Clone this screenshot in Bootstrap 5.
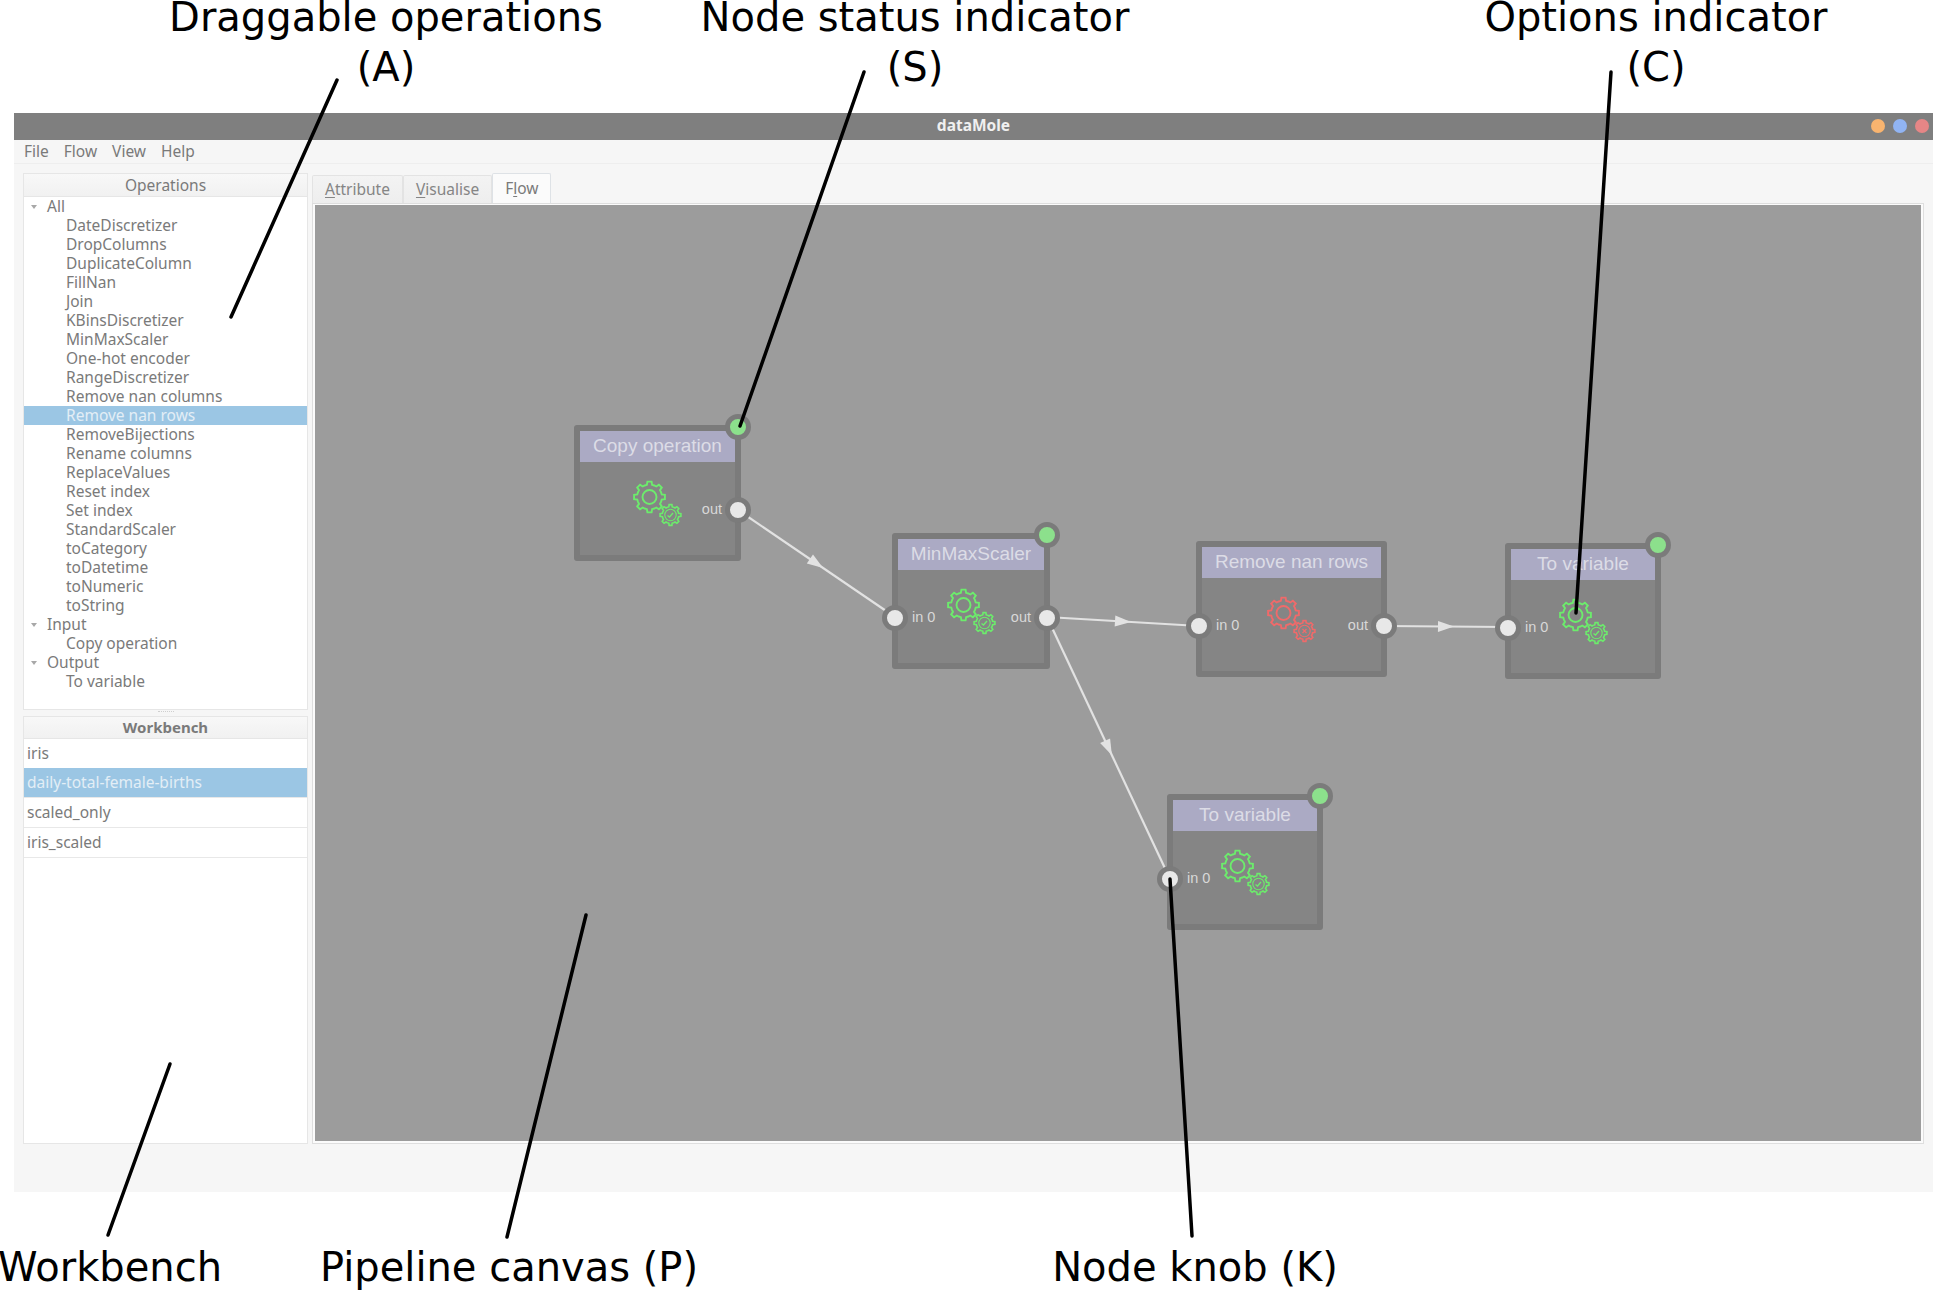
<!DOCTYPE html>
<html lang="en">
<head>
  <meta charset="UTF-8" />
  <title>dataMole</title>
  <link href="https://cdn.jsdelivr.net/npm/bootstrap@5.3.3/dist/css/bootstrap.min.css" rel="stylesheet" />
  <style>
    body {
      background: #fff;
      width: 1933px;
      height: 1290px;
      position: relative;
      overflow: hidden;
      font-family: "Noto Sans", "Open Sans", sans-serif;
      font-size: 15.5px;
      color: #7a7a7a;
    }
    .app-window {
      margin: 113px 0 0 14px;
      width: 1919px;
      height: 1079px;
      background: #f6f6f6;
    }
    .title-bar {
      height: 27px;
      padding-bottom: 2px;
      background: #7f7f7f;
      color: #f0f0f0;
      font-weight: 700;
      font-size: 15.5px;
    }
    .traffic {
      right: 4px;
      top: 6px;
    }
    .traffic span {
      width: 14px;
      height: 14px;
      border-radius: 50%;
      display: block;
    }
    .menu-bar {
      height: 24px;
      padding-left: 10px;
      gap: 15px;
      border-bottom: 1px solid #eeeeee;
      line-height: 22px;
    }
    .work-area {
      height: 1028px;
      padding: 9px 9px 48px 9px;
      gap: 4px;
    }
    .side-col {
      width: 285px;
      flex: none;
    }
    .panel-head {
      height: 24px;
      line-height: 22px;
      text-align: center;
      background: linear-gradient(#f8f8f8, #f1f1f1);
      border: 1px solid #e6e6e6;
    }
    .tree-panel {
      height: 513px;
      background: #fff;
      border: 1px solid #e6e6e6;
      border-top: 0;
    }
    .splitter {
      height: 5px;
      width: 16px;
      margin: 1px auto 0 auto;
      border-top: 1px dotted #cfcfcf;
    }
    .tree-row {
      height: 19px;
      line-height: 18px;
      white-space: nowrap;
    }
    .tree-row.leaf {
      padding-left: 42px;
    }
    .tree-row.group {
      padding-left: 23px;
      position: relative;
    }
    .tree-row.group::before {
      content: "";
      position: absolute;
      left: 7px;
      top: 8px;
      border: 3.5px solid transparent;
      border-top: 4px solid #a8a8a8;
      border-bottom: 0;
    }
    .tree-row.picked {
      background: #9bc6e4;
      color: #e3eef6;
    }
    .wb-head {
      font-weight: 700;
      font-size: 15px;
      height: 23px;
      line-height: 21px;
    }
    .wb-list {
      flex: 1;
      background: #fff;
      border: 1px solid #e6e6e6;
      border-top: 0;
      border-radius: 0;
    }
    .wb-list .list-group-item {
      height: 30px;
      line-height: 28px;
      padding: 0 3px;
      color: #7a7a7a;
      background: #fff;
      border: 0;
      border-bottom: 1px solid #e8e8e8;
      border-radius: 0;
      margin-top: 0;
    }
    .wb-list .list-group-item.active {
      background: #9bc6e4;
      color: #e3eef6;
    }
    .canvas-col {
      flex: 1;
      min-width: 0;
    }
    .nav-tabs.flow-tabs {
      height: 30px;
      padding-top: 2px;
      border: 0;
      gap: 0;
    }
    .flow-tabs .nav-link {
      height: 28px;
      line-height: 26px;
      padding: 0 12px;
      margin: 0;
      color: #858585;
      background: linear-gradient(#f3f3f3, #eeeeee);
      border: 1px solid #e3e3e3;
      border-bottom: 0;
      border-radius: 2px 2px 0 0;
    }
    .flow-tabs .nav-link u {
      text-underline-offset: 2px;
    }
    .flow-tabs .nav-link.active {
      height: 30px;
      margin: -2px 0 0 0;
      line-height: 28px;
      color: #7a7a7a;
      background: #fbfbfb;
    }
    .canvas-frame {
      height: 941px;
      border: 1px solid #dedede;
      padding: 1px 2px 2px 2px;
      background: #fbfbfb;
    }
    .pipeline-canvas {
      position: relative;
      width: 100%;
      height: 100%;
      background: #9c9c9c;
      overflow: hidden;
    }
    .wires {
      position: absolute;
      left: 0;
      top: 0;
    }
    .flow-node {
      position: absolute;
      border: 6px solid #7b7b7b;
      border-radius: 3px;
      background: #858585;
      font-family: "Liberation Sans", Arial, sans-serif;
    }
    .node-title {
      height: 31px;
      line-height: 29px;
      background: #abaac4;
      color: #dcdce6;
      font-size: 19px;
      text-align: center;
      white-space: nowrap;
    }
    .node-body {
      height: 93px;
      display: grid;
      grid-template-columns: 1fr 52px 1fr;
      align-items: center;
      padding: 3px 13px 0 14px;
      color: #d8d8d8;
      font-size: 14.5px;
    }
    .node-body svg {
      align-self: start;
      margin: 12px 0 0 -1px;
      overflow: visible;
    }
    .port-out {
      text-align: right;
    }
    .knob {
      position: absolute;
      width: 26px;
      height: 26px;
      border-radius: 50%;
      border: 5px solid #7b7b7b;
      background: #e8e8e8;
    }
    .knob.port-left {
      left: -16px;
      top: 66px;
    }
    .knob.port-right {
      right: -16px;
      top: 66px;
    }
    .knob.status {
      right: -16px;
      top: -17px;
      background: #8ce08c;
    }
    .note-lines {
      position: absolute;
      left: 0;
      top: 0;
      pointer-events: none;
    }
    .note {
      position: absolute;
      width: 700px;
      gap: 15px;
      text-align: center;
      font-family: "DejaVu Sans", sans-serif;
      font-size: 40px;
      line-height: 35px;
      color: #000;
      white-space: nowrap;
    }
    .note-a { left: 36px; top: 0; }
    .note-s { left: 565px; top: 0; }
    .note-c { left: 1306px; top: 0; }
    .note-w { left: -240px; top: 1250px; }
    .note-p { left: 159px; top: 1250px; }
    .note-k { left: 845px; top: 1250px; }
  </style>
</head>
<body>
  <div class="app-window d-flex flex-column">
    <div class="title-bar position-relative d-flex align-items-center justify-content-center">
      dataMole
      <div class="traffic position-absolute d-flex gap-2">
        <span style="background:#f9b46f"></span>
        <span style="background:#91b4f3"></span>
        <span style="background:#e68686"></span>
      </div>
    </div>
    <div class="menu-bar d-flex">
      <span>File</span><span>Flow</span><span>View</span><span>Help</span>
    </div>
    <div class="work-area d-flex">
      <div class="side-col d-flex flex-column">
        <div class="panel-head">Operations</div>
        <div class="tree-panel" id="opsTree"></div>
        <div class="splitter"></div>
        <div class="panel-head wb-head">Workbench</div>
        <div class="list-group wb-list">
          <div class="list-group-item">iris</div>
          <div class="list-group-item active">daily-total-female-births</div>
          <div class="list-group-item">scaled_only</div>
          <div class="list-group-item">iris_scaled</div>
        </div>
      </div>
      <div class="canvas-col d-flex flex-column">
        <ul class="nav nav-tabs flow-tabs">
          <li class="nav-item"><a class="nav-link"><u>A</u>ttribute</a></li>
          <li class="nav-item"><a class="nav-link"><u>V</u>isualise</a></li>
          <li class="nav-item"><a class="nav-link active">F<u>l</u>ow</a></li>
        </ul>
        <div class="canvas-frame">
          <div class="pipeline-canvas" id="canvas"></div>
        </div>
      </div>
    </div>
  </div>

  <svg class="note-lines" width="1933" height="1290" stroke="#000" stroke-width="3.5" stroke-linecap="round">
    <line x1="337" y1="80" x2="231" y2="317" />
    <line x1="864" y1="72" x2="740" y2="426" />
    <line x1="1611" y1="72" x2="1576" y2="613" />
    <line x1="1192" y1="1236" x2="1170" y2="879" />
    <line x1="507" y1="1237" x2="586" y2="915" />
    <line x1="108" y1="1235" x2="170" y2="1064" />
  </svg>

  <div class="note note-a d-flex flex-column"><span>Draggable operations</span><span>(A)</span></div>
  <div class="note note-s d-flex flex-column"><span>Node status indicator</span><span>(S)</span></div>
  <div class="note note-c d-flex flex-column"><span>Options indicator</span><span>(C)</span></div>
  <div class="note note-w">Workbench</div>
  <div class="note note-p">Pipeline canvas (P)</div>
  <div class="note note-k">Node knob (K)</div>

  <script src="https://cdn.jsdelivr.net/npm/bootstrap@5.3.3/dist/js/bootstrap.bundle.min.js"></script>
  <script>
    const opsTree = document.getElementById('opsTree');
    const canvas = document.getElementById('canvas');

    // canvas origin in page pixels, node data below is in page pixels too
    const originX = 315;
    const originY = 205;

    const groups = [
      ['All', ['DateDiscretizer', 'DropColumns', 'DuplicateColumn', 'FillNan', 'Join', 'KBinsDiscretizer',
        'MinMaxScaler', 'One-hot encoder', 'RangeDiscretizer', 'Remove nan columns', 'Remove nan rows',
        'RemoveBijections', 'Rename columns', 'ReplaceValues', 'Reset index', 'Set index', 'StandardScaler',
        'toCategory', 'toDatetime', 'toNumeric', 'toString']],
      ['Input', ['Copy operation']],
      ['Output', ['To variable']]
    ];

    opsTree.innerHTML = groups.map(([name, items]) =>
      `<div class="tree-row group">${name}</div>` + items.map(item =>
        `<div class="tree-row leaf${item === 'Remove nan rows' ? ' picked' : ''}">${item}</div>`).join('')
    ).join('');

    const nodes = [
      { title: 'Copy operation', x: 574, y: 425, w: 167, input: false, output: true, status: true, color: '#6cec6c', mark: 'check' },
      { title: 'MinMaxScaler', x: 892, y: 533, w: 158, input: true, output: true, status: true, color: '#6cec6c', mark: 'check' },
      { title: 'Remove nan rows', x: 1196, y: 541, w: 191, input: true, output: true, status: false, color: '#f06a6a', mark: 'cross' },
      { title: 'To variable', x: 1505, y: 543, w: 156, input: true, output: false, status: true, color: '#6cec6c', mark: 'check' },
      { title: 'To variable', x: 1167, y: 794, w: 156, input: true, output: false, status: true, color: '#6cec6c', mark: 'check' }
    ];

    const wires = [
      [738, 510, 895, 617],
      [1047, 617, 1199, 626],
      [1384, 626, 1508, 627],
      [1047, 617, 1170, 879]
    ];

    function gearPath(cx, cy, r, depth, teeth) {
      const step = Math.PI * 2 / teeth;
      let d = '';
      for (let i = 0; i < teeth; i++) {
        const a = i * step;
        const pts = [
          [r - depth, a - step * 0.5],
          [r - depth, a - step * 0.27],
          [r, a - step * 0.17],
          [r, a + step * 0.17],
          [r - depth, a + step * 0.27]
        ];
        pts.forEach(([rad, ang], j) => {
          const px = (cx + rad * Math.cos(ang)).toFixed(1);
          const py = (cy + rad * Math.sin(ang)).toFixed(1);
          d += (i === 0 && j === 0 ? 'M' : 'L') + px + ' ' + py;
        });
      }
      return d + 'Z';
    }

    function gearIcon(color, mark) {
      const inner = mark === 'check'
        ? '<path d="M36.5 38.5l2 1.5 3.5-4" stroke-width="1.4" />'
        : '<path d="M37.5 36l4 4M41.5 36l-4 4" stroke-width="1.2" />';
      return `<svg width="52" height="52" viewBox="0 0 52 52" fill="none" stroke="${color}" stroke-width="1.9">
        <path d="${gearPath(18.5, 20, 15.5, 3, 8)}" />
        <circle cx="18.5" cy="20" r="7" />
        <path d="${gearPath(39.5, 38, 10.5, 2.2, 8)}" stroke-width="1.6" />
        <circle cx="39.5" cy="38" r="5.7" stroke-width="1.1" />
        ${inner}
      </svg>`;
    }

    function renderWires() {
      const lines = wires.map(([x1, y1, x2, y2]) => {
        const ax = x1 - originX;
        const ay = y1 - originY;
        const bx = x2 - originX;
        const by = y2 - originY;
        const mx = (ax + bx) / 2;
        const my = (ay + by) / 2;
        const angle = Math.atan2(by - ay, bx - ax) * 180 / Math.PI;
        return `<line x1="${ax}" y1="${ay}" x2="${bx}" y2="${by}" />
          <polygon points="8,0 -8,-5.5 -8,5.5" transform="translate(${mx} ${my}) rotate(${angle})" fill="#e2e2e2" stroke="none" />`;
      }).join('');
      canvas.insertAdjacentHTML('beforeend',
        `<svg class="wires" width="1606" height="937" stroke="#e2e2e2" stroke-width="2.2">${lines}</svg>`);
    }

    function renderNodes() {
      nodes.forEach(node => {
        const el = document.createElement('div');
        el.className = 'flow-node';
        el.style.left = (node.x - originX) + 'px';
        el.style.top = (node.y - originY) + 'px';
        el.style.width = node.w + 'px';
        el.innerHTML = `
          <div class="node-title">${node.title}</div>
          <div class="node-body">
            <span>${node.input ? 'in 0' : ''}</span>
            ${gearIcon(node.color, node.mark)}
            <span class="port-out">${node.output ? 'out' : ''}</span>
          </div>
          ${node.input ? '<div class="knob port-left"></div>' : ''}
          ${node.output ? '<div class="knob port-right"></div>' : ''}
          ${node.status ? '<div class="knob status"></div>' : ''}
        `;
        canvas.appendChild(el);
      });
    }

    renderWires();
    renderNodes();
  </script>
</body>
</html>
